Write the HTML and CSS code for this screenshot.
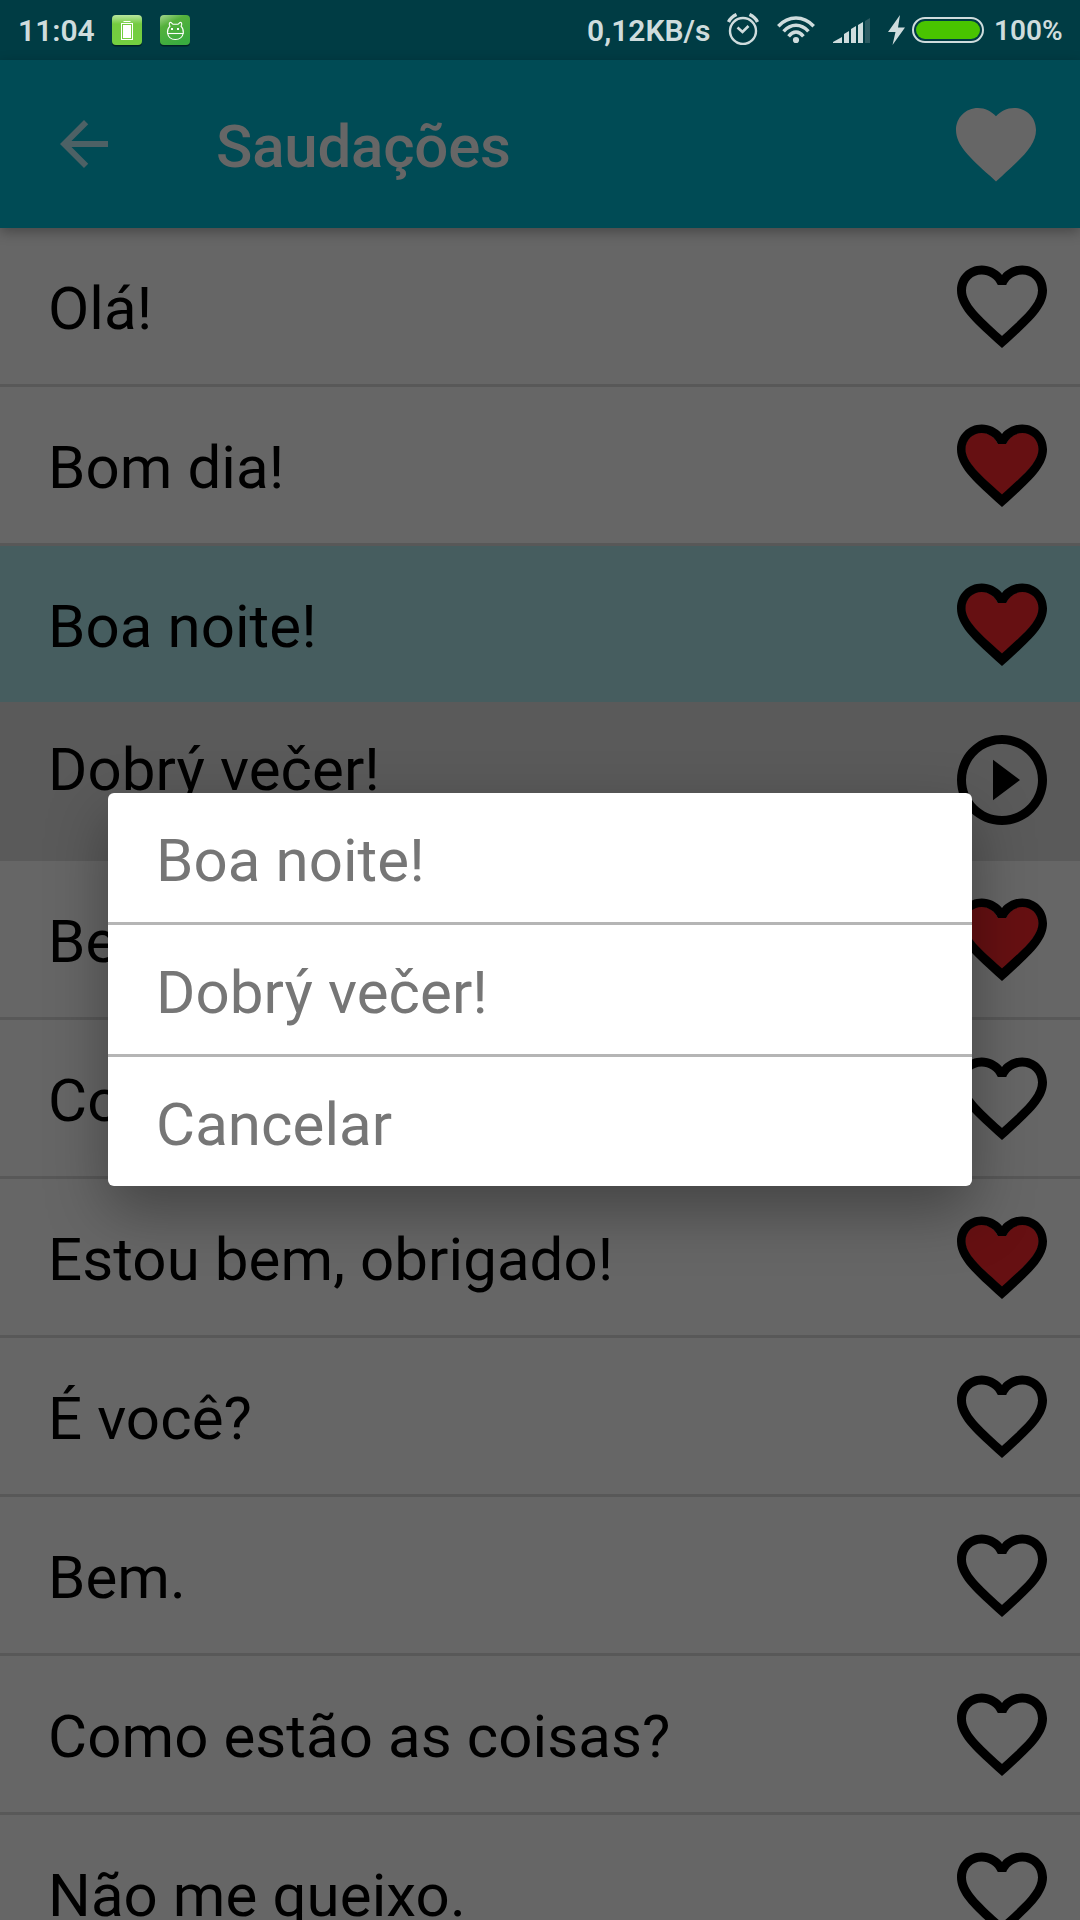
FILE: index.html
```html
<!DOCTYPE html>
<html lang="pt">
<head>
<meta charset="utf-8">
<title>Saudações</title>
<link rel="stylesheet" href="styles.css">
</head>
<body>
<svg class="sprite" aria-hidden="true">
  <symbol id="heart-line" viewBox="0 0 24 24"><path d="M16.5 3c-1.74 0-3.41.81-4.5 2.09C10.91 3.81 9.24 3 7.5 3 4.42 3 2 5.42 2 8.5c0 3.78 3.4 6.86 8.55 11.54L12 21.35l1.45-1.32C18.6 15.36 22 12.28 22 8.5 22 5.42 19.58 3 16.5 3zm-4.4 15.55l-.1.1-.1-.1C7.14 14.24 4 11.39 4 8.5 4 6.5 5.5 5 7.5 5c1.54 0 3.04.99 3.57 2.36h1.87C13.46 5.99 14.96 5 16.5 5c2 0 3.5 1.5 3.5 3.5 0 2.89-3.14 5.74-7.9 10.05z"/></symbol>
  <symbol id="heart-red" viewBox="0 0 24 24"><path fill="#661012" d="M12 18.75C7.14 14.24 3.8 11.39 3.8 8.5 3.8 6.5 5.4 4.8 7.5 4.8c1.54 0 3.04 1.19 3.57 2.56h1.87c.52-1.37 2.02-2.56 3.56-2.56 2.1 0 3.7 1.7 3.7 3.7 0 2.89-3.34 5.74-8.2 10.25z"/><path d="M16.5 3c-1.74 0-3.41.81-4.5 2.09C10.91 3.81 9.24 3 7.5 3 4.42 3 2 5.42 2 8.5c0 3.78 3.4 6.86 8.55 11.54L12 21.35l1.45-1.32C18.6 15.36 22 12.28 22 8.5 22 5.42 19.58 3 16.5 3zm-4.4 15.45l-.1.1-.1-.1C7.14 14.14 3.9 11.39 3.9 8.5 3.9 6.4 5.5 4.9 7.5 4.9c1.54 0 3.04 1.09 3.57 2.46h1.87C13.46 5.99 14.96 4.9 16.5 4.9c2 0 3.6 1.5 3.6 3.6 0 2.89-3.24 5.64-8 9.95z"/></symbol>
</svg>
<div class="screen">
  <header class="status">
    <span class="clock">11:04</span>
    <svg class="app" width="30" height="32" viewBox="0 0 30 32">
      <defs><linearGradient id="g1" x2="0" y2="1"><stop offset="0" stop-color="#b9e6a0"/><stop offset=".3" stop-color="#74cb40"/><stop offset="1" stop-color="#74d040"/></linearGradient></defs>
      <rect y="1.5" width="30" height="30" rx="4" fill="#002226"/><rect width="30" height="30" rx="4" fill="url(#g1)"/>
      <path d="M11.500 6.500h7" stroke="#fff"/><rect x="9.500" y="8.500" width="11" height="16" fill="none" stroke="#fff"/><rect x="11" y="10" width="8" height="13" fill="#fff"/>
    </svg>
    <svg class="app" width="30" height="32" viewBox="0 0 30 32">
      <defs><linearGradient id="g2" x2="0.500" y2="1"><stop offset="0" stop-color="#a5d890"/><stop offset=".35" stop-color="#55b13c"/><stop offset="1" stop-color="#3aac3f"/></linearGradient></defs>
      <rect y="1.5" width="30" height="30" rx="4" fill="#002226"/><rect width="30" height="30" rx="4" fill="url(#g2)"/>
      <g fill="none" stroke="#fff" stroke-width="1.100"><path d="M10 11.200C8.500 9 9.500 6.800 11 7.500l2 1.800h5l2-1.800c1.500-.7 2.500 1.500 1 3.700 2 2 2.600 4 2.300 6.800-.8 4.200-4.200 6.500-8 6.500s-7-2.300-7.800-6.500c-.3-2.800.4-4.800 2.500-6.800z"/><path d="M7.500 18.500h16"/></g><path d="M11 13h2v2h-2zM17 13h2v2h-2z" fill="#fff"/>
    </svg>
    <span class="speed">0,12KB/s</span>
    <svg class="alarm" width="32" height="32" viewBox="0 0 32 32" fill="none" stroke="#cfdcdd"><circle cx="16" cy="18" r="13" stroke-width="2.400"/><path d="M10.500 14.500l5 4.500 6-6" stroke-width="2.600"/><path d="M1.500 9Q4 4 9.500 1.500M30.500 9Q28 4 22.500 1.500" stroke-width="3.400"/></svg>
    <svg class="wifi" width="38" height="28" viewBox="0 0 38 28" fill="none" stroke="#cfdcdd" stroke-width="3.500"><path d="M1.300 10.200Q9 2 19 2t17.700 8.200M6.600 15.400Q12 9.300 19 9.300t12.400 6.100M11.600 20.300Q15 16.100 19 16.100t7.400 4.200"/><circle cx="19" cy="24" r="3.100" fill="#cfdcdd" stroke="none"/></svg>
    <svg class="signal" width="38" height="26" viewBox="0 0 38 26" fill="#cfdcdd"><path d="M0 25v-1l9-5v6zM11 25v-9l5-3v12zM18 25V11l5-3v17zM25 25V7l5-3v21z"/><path d="M32 25V3l5-3v25z" fill="#2c5b62"/></svg>
    <svg class="bolt" width="17" height="30" viewBox="0 0 17 30" fill="#cfdcdd"><path d="M12 0L0 17h7.500L4.500 30 17 12.500H10z"/></svg>
    <span class="battery"></span>
    <span class="percent">100%</span>
  </header>
  <div class="bar">
    <svg width="72" height="72" viewBox="0 0 24 24" fill="#4d6165"><path d="M20 11H7.830l5.590-5.590L12 4l-8 8 8 8 1.410-1.410L7.830 13H20v-2z"/></svg>
    <h1>Saudações</h1>
    <svg width="96" height="96" viewBox="0 0 24 24" fill="#666"><path d="M12 21.350l-1.450-1.320C5.400 15.360 2 12.280 2 8.500 2 5.420 4.420 3 7.500 3c1.740 0 3.410.81 4.500 2.090C13.090 3.810 14.760 3 16.500 3 19.580 3 22 5.420 22 8.500c0 3.780-3.400 6.860-8.550 11.540L12 21.350z"/></svg>
  </div>
  <main class="list">
    <div class="row"><span>Olá!</span><svg class="icon"><use href="#heart-line"/></svg></div>
    <div class="row"><span>Bom dia!</span><svg class="icon"><use href="#heart-red"/></svg></div>
    <div class="row selected"><span>Boa noite!</span><svg class="icon"><use href="#heart-red"/></svg></div>
    <div class="row translation"><span>Dobrý večer!</span><svg class="icon" viewBox="0 0 24 24"><path d="M10 16.500l6-4.500-6-4.500v9zM12 2C6.480 2 2 6.480 2 12s4.480 10 10 10 10-4.480 10-10S17.520 2 12 2zm0 18c-4.410 0-8-3.590-8-8s3.590-8 8-8 8 3.590 8 8-3.590 8-8 8z"/></svg></div>
    <div class="row"><span>Bem-vindo!</span><svg class="icon"><use href="#heart-red"/></svg></div>
    <div class="row"><span>Como vai?</span><svg class="icon"><use href="#heart-line"/></svg></div>
    <div class="row"><span>Estou bem, obrigado!</span><svg class="icon"><use href="#heart-red"/></svg></div>
    <div class="row"><span>É você?</span><svg class="icon"><use href="#heart-line"/></svg></div>
    <div class="row"><span>Bem.</span><svg class="icon"><use href="#heart-line"/></svg></div>
    <div class="row"><span>Como estão as coisas?</span><svg class="icon"><use href="#heart-line"/></svg></div>
    <div class="row"><span>Não me queixo.</span><svg class="icon"><use href="#heart-line"/></svg></div>
  </main>
  <div class="dialog" role="dialog">
    <div class="option">Boa noite!</div>
    <div class="option">Dobrý večer!</div>
    <div class="option">Cancelar</div>
  </div>
</div>
</body>
</html>
```
FILE: styles.css
```css
* { box-sizing: border-box; }
body { margin: 0; background: #666; font-family: Roboto, "Noto Sans", sans-serif; }
.sprite { position: absolute; width: 0; height: 0; }
svg { flex: none; display: block; }
.screen { position: relative; width: 1080px; height: 1920px; overflow: hidden; background: #666; }

.status { display: flex; align-items: flex-start; height: 60px; padding-left: 18px; background: #003c44; color: #cfdcdd; font-size: 30px; font-weight: 600; line-height: 62px; white-space: nowrap; }
.clock { width: 94px; }
.app { margin: 15px 18px 0 0; }
.speed { width: 140px; margin-left: 379px; }
.alarm { margin-top: 13px; }
.wifi { margin: 16px 0 0 18px; }
.signal { margin: 18px 0 0 18px; }
.bolt { margin: 15px 0 0 17px; }
.battery { width: 72px; height: 26px; margin: 17px 0 0 7px; border: 2px solid #cfdcdd; border-radius: 13px; padding: 2px; background: #49c400 content-box; }
.percent { margin-left: 10px; font-size: 28px; }

.bar { position: relative; z-index: 1; display: flex; align-items: center; height: 168px; padding: 0 36px 0 48px; background: #004b55; box-shadow: 0 4px 12px rgba(0, 0, 0, .3); }
.bar h1 { flex: 1; margin: 0 0 0 96px; color: #666; font-size: 60px; font-weight: 500; line-height: 70px; letter-spacing: -.2px; padding-top: 5px; }

.row { display: flex; justify-content: space-between; align-items: center; height: 159px; padding: 0 24px 0 48px; border-bottom: 3px solid #585858; color: #000; font-size: 60px; line-height: 70px; letter-spacing: .08px; white-space: nowrap; }
.row span { padding-top: 6px; }
.icon { width: 108px; height: 108px; }
.selected { height: 156px; border-bottom: 0; background: #465d5f; }
.translation { background: #5a5a5a; border-color: #5a5a5a; }
.translation span { padding: 0 0 20px; }

.dialog { position: absolute; z-index: 2; left: 108px; top: 793px; width: 864px; height: 393px; border-radius: 6px; background: #fff; box-shadow: 0 24px 60px rgba(0, 0, 0, .34); }
.option { height: 132px; padding: 33px 48px 0; border-bottom: 3px solid #b5b5b5; color: #767676; font-size: 60px; line-height: 70px; letter-spacing: .08px; }
.option:last-child { border-bottom: 0; }
```
